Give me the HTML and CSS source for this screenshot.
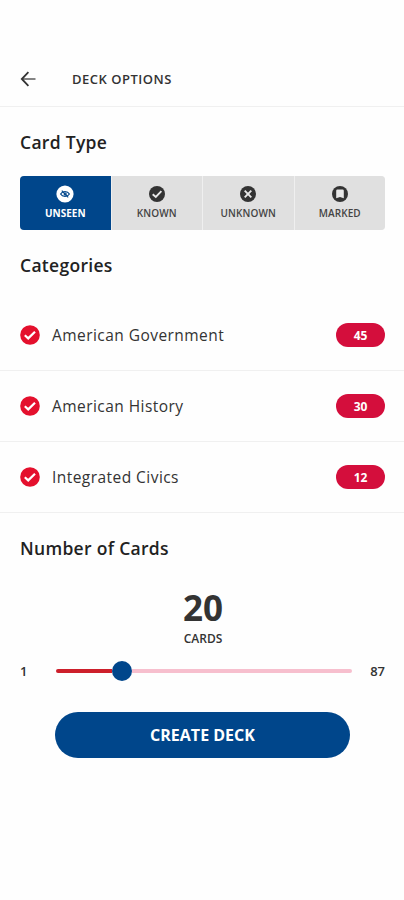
FILE: index.html
```html
<!DOCTYPE html>
<html lang="en">
<head>
    <meta charset="UTF-8">
    <meta name="viewport" content="width=device-width, initial-scale=1.0">
    <title>Deck Options</title>
    <link rel="stylesheet" href="styles.css">
</head>
<body>
    <header class="top-bar">
        <button class="back-button" aria-label="Back">
            <svg width="16" height="16" viewBox="0 0 16 16"><path class="shaft" d="M15.5 8H2"/><path d="M8.4 1.2L1.8 8L8.4 14.8"/></svg>
        </button>
        <h1>DECK OPTIONS</h1>
    </header>

    <main>
        <h2>Card Type</h2>
        <div class="card-types">
            <button class="card-type active">
                <svg width="18" height="18" viewBox="0 0 18 18">
                    <circle class="disc" cx="9" cy="9" r="8.6"/>
                    <path class="eye" d="M4.6 9C6.4 5.9 11.6 5.9 13.4 9C11.6 12.1 6.4 12.1 4.6 9Z"/>
                    <circle class="pupil" cx="9.2" cy="9" r="1"/>
                    <path class="slash" d="M5.8 5.6L12.2 12.4"/>
                </svg>
                <span>UNSEEN</span>
            </button>
            <button class="card-type">
                <svg width="18" height="18" viewBox="0 0 18 18">
                    <circle class="disc" cx="9" cy="9" r="8"/>
                    <path class="mark" d="M4.7 9.2L7.8 12L13.4 6.2"/>
                </svg>
                <span>KNOWN</span>
            </button>
            <button class="card-type">
                <svg width="18" height="18" viewBox="0 0 18 18">
                    <circle class="disc" cx="9" cy="9" r="8"/>
                    <path class="mark" d="M5.7 5.7L12.3 12.3M12.3 5.7L5.7 12.3"/>
                </svg>
                <span>UNKNOWN</span>
            </button>
            <button class="card-type">
                <svg width="18" height="18" viewBox="0 0 18 18">
                    <circle class="disc" cx="9" cy="9" r="8"/>
                    <path class="bookmark" d="M6.4 4.6H11.6Q12.8 4.6 12.8 5.8V13.2L9 11.9L5.2 13.2V5.8Q5.2 4.6 6.4 4.6Z"/>
                </svg>
                <span>MARKED</span>
            </button>
        </div>

        <h2>Categories</h2>
        <ul class="categories">
            <li>
                <svg width="20" height="20" viewBox="0 0 20 20"><circle cx="10" cy="10" r="9.8"/><path d="M4.8 10.3L8.2 13.4L15 6.7"/></svg>
                <span class="name">American Government</span>
                <span class="count">45</span>
            </li>
            <li>
                <svg width="20" height="20" viewBox="0 0 20 20"><circle cx="10" cy="10" r="9.8"/><path d="M4.8 10.3L8.2 13.4L15 6.7"/></svg>
                <span class="name">American History</span>
                <span class="count">30</span>
            </li>
            <li>
                <svg width="20" height="20" viewBox="0 0 20 20"><circle cx="10" cy="10" r="9.8"/><path d="M4.8 10.3L8.2 13.4L15 6.7"/></svg>
                <span class="name">Integrated Civics</span>
                <span class="count">12</span>
            </li>
        </ul>

        <h2>Number of Cards</h2>
        <div class="total">
            <span class="total-number">20</span>
            <span class="total-label">CARDS</span>
        </div>
        <div class="slider">
            <span class="min">1</span>
            <div class="track">
                <div class="fill"></div>
                <div class="thumb"></div>
                <div class="rest"></div>
            </div>
            <span class="max">87</span>
        </div>
        <button class="create-button">CREATE DECK</button>
    </main>
</body>
</html>
```
FILE: styles.css
```css
* {
    margin: 0;
    padding: 0;
    box-sizing: border-box;
}
body {
    background: #fefefe;
    color: #333;
    font-family: "Open Sans", sans-serif;
    min-height: 100vh;
}
button {
    border: none;
    font-family: inherit;
    cursor: pointer;
}
svg {
    display: block;
    flex-shrink: 0;
}
.top-bar {
    height: 107px;
    padding: 52px 20px 0;
    display: flex;
    align-items: center;
    border-bottom: 1px solid #f0f0f0;
}
.back-button {
    background: none;
    width: 52px;
}
.back-button path {
    fill: none;
    stroke: #333;
    stroke-width: 1.8;
}
.back-button .shaft {
    stroke: #666;
    stroke-width: 1.6;
}
h1 {
    font-size: 13px;
    font-weight: 600;
    letter-spacing: 0.5px;
}
h2 {
    font-size: 17.5px;
    font-weight: 600;
    line-height: 24px;
    letter-spacing: 0.3px;
    color: #222;
    padding: 0 20px;
}
main h2:first-child {
    margin-top: 23px;
}
.card-types {
    display: flex;
    gap: 1px;
    height: 54px;
    margin: 22px 19px 23px 20px;
    border-radius: 4px;
    overflow: hidden;
    background: #efefef;
}
.card-type {
    flex: 1;
    display: flex;
    flex-direction: column;
    align-items: center;
    padding-top: 9px;
    background: #e0e0e0;
    color: #333;
}
.card-type span {
    font-size: 10px;
    font-weight: 600;
    line-height: 14px;
    margin-top: 3px;
    letter-spacing: 0.1px;
    color: #444;
}
.card-type.active {
    background: #00468b;
}
.card-type.active svg {
    color: white;
}
.card-type.active span {
    color: white;
    font-weight: 700;
    letter-spacing: 0;
}
.card-type .disc {
    fill: currentColor;
}
.mark {
    fill: none;
    stroke: #e8e8e8;
    stroke-width: 1.9;
}
.bookmark {
    fill: #e8e8e8;
}
.eye,
.pupil {
    fill: none;
    stroke: #00468b;
    stroke-width: 1.2;
}
.slash {
    stroke: #00468b;
    stroke-width: 1.1;
}
.categories {
    list-style: none;
    margin: 23px 0;
}
.categories li {
    display: flex;
    align-items: center;
    height: 71px;
    padding: 0 19px 0 20px;
    border-bottom: 1px solid #f0f0f0;
}
.categories circle {
    fill: #e4102d;
}
.categories path {
    fill: none;
    stroke: white;
    stroke-width: 2.2;
}
.name {
    flex: 1;
    margin-left: 12px;
    font-size: 15.5px;
    font-weight: 500;
    letter-spacing: 0.45px;
}
.count {
    width: 49px;
    height: 24px;
    border-radius: 12px;
    background: #d40e3c;
    color: white;
    font-size: 12px;
    font-weight: 700;
    line-height: 25px;
    text-align: center;
}
.total {
    display: flex;
    flex-direction: column;
    align-items: center;
    margin-top: 25px;
    padding-left: 2px;
}
.total-number {
    font-size: 35px;
    font-weight: 700;
    line-height: 46px;
}
.total-label {
    font-size: 12px;
    font-weight: 600;
    line-height: 16px;
}
.slider {
    display: flex;
    align-items: center;
    height: 20px;
    margin-top: 14px;
    padding: 0 19px 0 20px;
    font-size: 13px;
    font-weight: 600;
}
.min {
    width: 36px;
}
.max {
    width: 33px;
    text-align: right;
}
.track {
    flex: 1;
    display: flex;
    align-items: center;
}
.fill {
    width: 56px;
    height: 4px;
    border-radius: 2px 0 0 2px;
    background: #cd1f2b;
}
.thumb {
    width: 20px;
    height: 20px;
    border-radius: 50%;
    background: #00468b;
}
.rest {
    flex: 1;
    height: 4px;
    border-radius: 0 2px 2px 0;
    background: #f7bfce;
}
.create-button {
    display: block;
    width: 295px;
    height: 46px;
    margin: 31px 0 0 55px;
    border-radius: 24px;
    background: #00468b;
    color: white;
    font-size: 16px;
    font-weight: 700;
}
```
